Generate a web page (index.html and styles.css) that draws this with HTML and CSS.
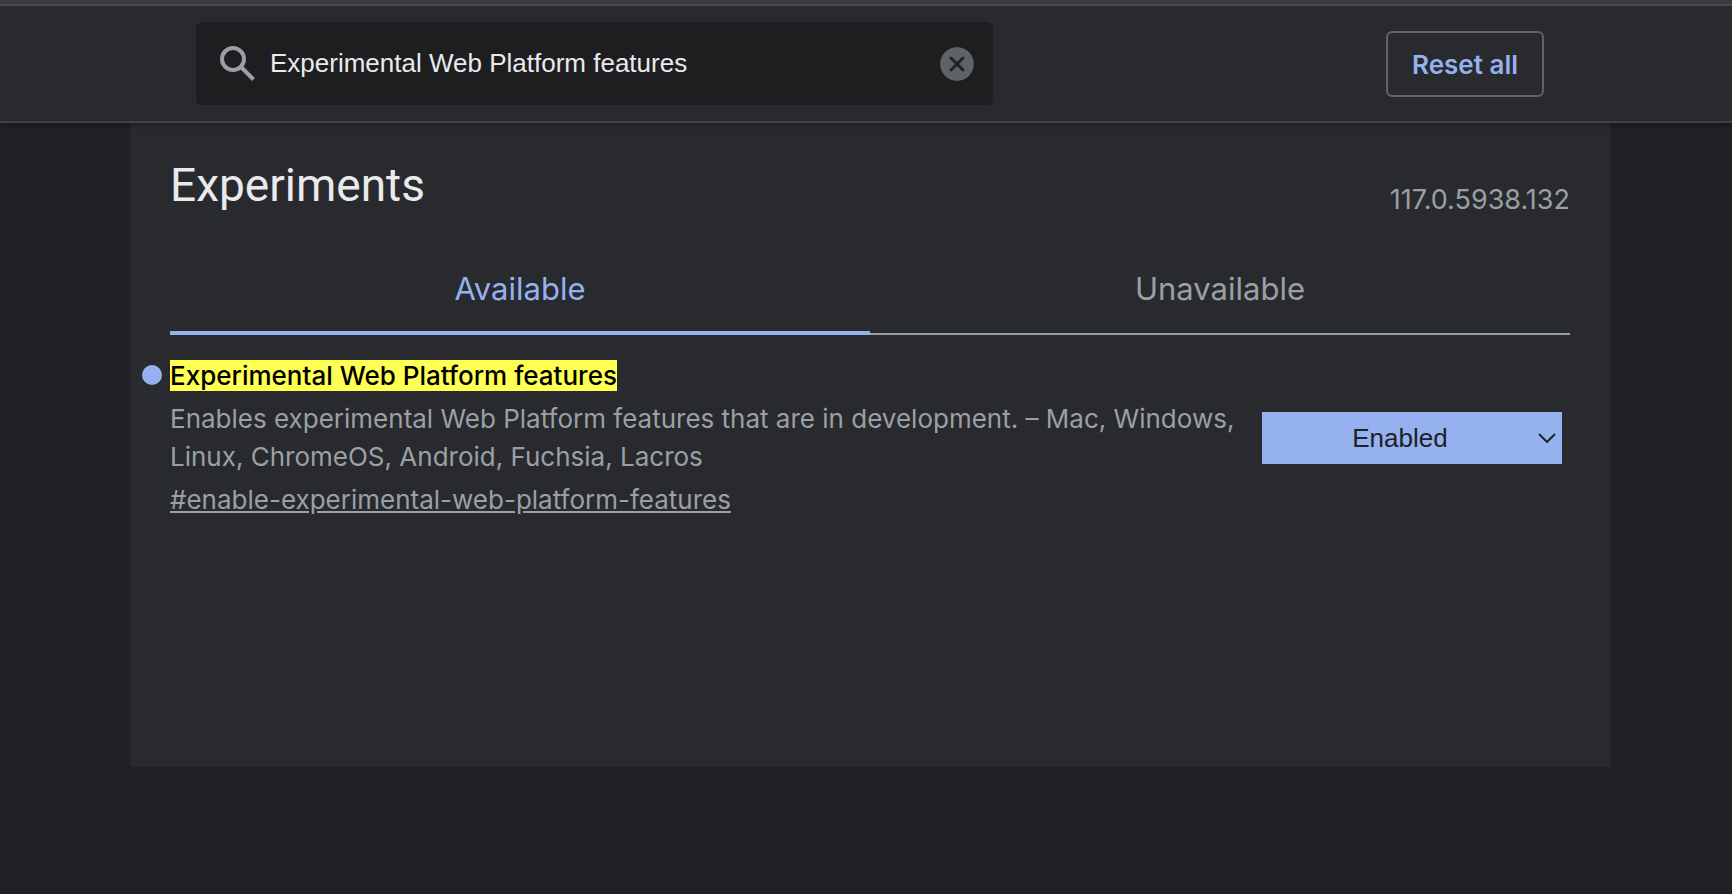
FILE: index.html
```html
<!DOCTYPE html>
<html lang="en">
<head>
<meta charset="utf-8">
<title>Experiments</title>
<link rel="stylesheet" href="styles.css">
</head>
<body>
<header class="header">
  <div class="header-inner">
    <div class="search">
      <svg class="search-icon" viewBox="0 0 36 36" aria-hidden="true"><circle cx="13" cy="13" r="11"/><path d="M21 21 33.500 33.500"/></svg>
      <input class="search-input" type="text" aria-label="Search flags" value="Experimental Web Platform features">
      <button class="clear" type="button" aria-label="Clear search">
        <svg class="clear-icon" viewBox="0 0 34 34" aria-hidden="true"><circle cx="17" cy="17" r="16.800"/><path d="M11 11 23 23M23 11 11 23"/></svg>
      </button>
    </div>
    <button class="reset" type="button">Reset all</button>
  </div>
</header>
<main class="main">
  <section class="panel">
    <div class="title-row">
      <h1 class="title">Experiments</h1>
      <span class="version">117.0.5938.132</span>
    </div>
    <div class="tabs" role="tablist">
      <button class="tab tab-selected" type="button" role="tab" aria-selected="true">Available</button>
      <button class="tab" type="button" role="tab" aria-selected="false">Unavailable</button>
    </div>
    <article class="experiment">
      <div class="details">
        <h2 class="name" id="flag-name"><mark class="match">Experimental Web Platform features</mark></h2>
        <p class="description">Enables experimental Web Platform features that are in development. – Mac, Windows, Linux, ChromeOS, Android, Fuchsia, Lacros</p>
        <a class="permalink" href="#enable-experimental-web-platform-features">#enable-experimental-web-platform-features</a>
      </div>
      <div class="choice">
        <select class="choice-select" aria-labelledby="flag-name">
          <option>Default</option>
          <option selected>Enabled</option>
          <option>Disabled</option>
        </select>
        <svg class="choice-arrow" viewBox="0 0 18 10" aria-hidden="true"><path d="M1 1 9 9 17 1"/></svg>
      </div>
    </article>
  </section>
</main>
</body>
</html>
```

FILE: styles.css
```css
* {
  box-sizing: border-box;
}

body {
  margin: 0;
  min-height: 100vh;
  background: #202124;
  color: #9aa0a6;
  font-family: Inter, Roboto, sans-serif;
  font-size: 26px;
  line-height: 38px;
}

button,
input,
select {
  margin: 0;
  border: 0;
  font: inherit;
}

.header {
  position: relative;
  padding: 16px 122px 16px 130px;
  background: #292a2d;
  border-bottom: 2px solid #3f4144;
  box-shadow: 0 2px 6px rgba(0, 0, 0, 0.3);
}

.header::before {
  content: "";
  position: absolute;
  top: 0;
  left: 0;
  right: 0;
  height: 4px;
  background: #3c3c3c;
  border-bottom: 2px solid #4a4a4a;
}

.header-inner {
  display: flex;
  align-items: center;
  justify-content: space-between;
  padding: 6px 66px 0;
}

.search {
  display: flex;
  align-items: center;
  flex: 0 1 797px;
  height: 83px;
  padding: 0 19px 0 24px;
  border-radius: 6px;
  background: #1e1e20;
}

.search-icon {
  flex: none;
  width: 36px;
  height: 36px;
  fill: none;
  stroke: #9aa0a6;
  stroke-width: 4;
}

.search-input {
  flex: 1;
  min-width: 0;
  padding: 0 0 2px 14px;
  background: transparent;
  color: #e8eaed;
  outline: 0;
  font-family: "Liberation Sans", Arial, sans-serif;
}

.clear {
  display: flex;
  flex: none;
  padding: 0;
  background: transparent;
}

.clear-icon {
  width: 34px;
  height: 34px;
  fill: #5f6368;
}

.clear-icon path {
  stroke: #202124;
  stroke-width: 3;
  stroke-linecap: round;
}

.reset {
  padding: 13px 24px 11px;
  border: 2px solid #5f6368;
  border-radius: 6px;
  background: transparent;
  color: #95b1f0;
  font-weight: 600;
}

.main {
  padding: 0 122px 0 130px;
}

.panel {
  min-height: 72vh;
  padding: 30px 40px;
  background: #292a2d;
}

.title-row {
  display: flex;
  align-items: flex-end;
  justify-content: space-between;
}

.title {
  margin: 0;
  padding-bottom: 2px;
  color: #e8eaed;
  font-family: Roboto, sans-serif;
  font-size: 46px;
  font-weight: 400;
  line-height: 64px;
}

.version {
  font-size: 27px;
}

.tabs {
  display: flex;
  margin-top: 32px;
}

.tab {
  flex: 1;
  height: 84px;
  padding: 0 0 6px;
  border-bottom: 2px solid #9aa0a6;
  background: transparent;
  color: #9aa0a6;
  font-size: 31px;
}

.tab-selected {
  padding-bottom: 4px;
  border-bottom: 4px solid #95b1f0;
  color: #95b1f0;
}

.experiment {
  display: flex;
  align-items: center;
  justify-content: space-between;
  padding-top: 22px;
}

.details {
  flex: 0 1 1076px;
}

.name {
  position: relative;
  margin: 0 0 5px;
  font-size: 26px;
  font-weight: 500;
}

.name::before {
  content: "";
  position: absolute;
  top: 8px;
  left: -28px;
  width: 20px;
  height: 20px;
  border-radius: 50%;
  background: #95b1f0;
}

.match {
  background: #ffff54;
  color: #000;
}

.description {
  margin: 0 0 5px;
}

.permalink {
  color: #9aa0a6;
}

.choice {
  position: relative;
  flex: none;
  width: 300px;
  margin-right: 8px;
}

.choice-select {
  appearance: none;
  display: block;
  width: 100%;
  height: 52px;
  padding: 0 24px 0 0;
  border-radius: 0;
  background: #95b1f0;
  color: #202124;
  font-family: "Liberation Sans", Arial, sans-serif;
  text-align-last: center;
}

.choice-arrow {
  position: absolute;
  top: 21px;
  right: 6px;
  width: 18px;
  height: 10px;
  fill: none;
  stroke: #202124;
  stroke-width: 2;
  pointer-events: none;
}
```
